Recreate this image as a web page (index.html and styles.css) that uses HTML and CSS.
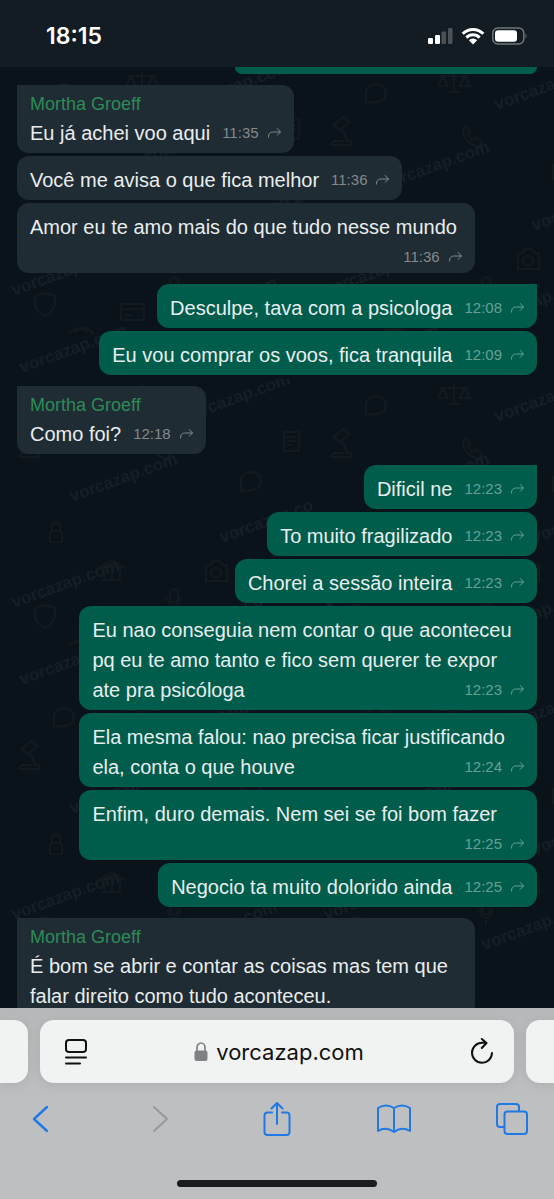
FILE: index.html
```html
<!DOCTYPE html>
<html lang="pt-BR">
<head>
<meta charset="utf-8">
<meta name="viewport" content="width=device-width, initial-scale=1">
<title>vorcazap.com</title>
<link rel="stylesheet" href="styles.css">
</head>
<body>
<svg class="defs" aria-hidden="true">
  <symbol id="fwd" viewBox="0 0 14 12"><path d="M1 10.500C1 6.500 2.500 5 6 5H13M9.500 1.200L13 5L9.500 8.500"/></symbol>
</svg>
<div class="phone">
  <header class="status">
    <time class="clock">18:15</time>
    <div class="status-icons">
      <svg width="26" height="18" viewBox="0 0 26 18" aria-label="Sinal">
        <g fill="#fff"><rect x="0" y="11" width="5" height="6" rx="1.200"/><rect x="7" y="8" width="5" height="9" rx="1.200"/></g>
        <g fill="#4a5157"><rect x="13.500" y="4.500" width="4.500" height="12.500" rx="1.200"/><rect x="20" y="1" width="4.500" height="16" rx="1.200"/></g>
      </svg>
      <svg width="24" height="18" viewBox="0 0 24 18" aria-label="Wi-Fi">
        <g fill="none" stroke="#fff" stroke-width="3"><path d="M1.700 6.700A14.600 14.600 0 0 1 22.300 6.700"/><path d="M5.400 10.600A9.300 9.300 0 0 1 18.600 10.600"/></g>
        <path d="M12 17.500L7.800 13.200A6 6 0 0 1 16.200 13.200Z" fill="#fff"/>
      </svg>
      <svg width="36" height="18" viewBox="0 0 36 18" aria-label="Bateria">
        <rect x=".8" y="1" width="31" height="16" rx="5" fill="none" stroke="#71777b" stroke-width="1.500"/>
        <rect x="3" y="3.200" width="22" height="11.600" rx="3" fill="#fff"/>
        <path d="M33.500 6.500Q35.500 9 33.500 11.500Z" fill="#71777b"/>
      </svg>
    </div>
  </header>

  <main class="chat">
    <svg class="wallpaper" aria-hidden="true">
      <defs>
        <pattern id="tile" width="312" height="312" patternUnits="userSpaceOnUse">
          <g class="ink">
            <path d="M142 5V25M136 25H148M128 9H156M131 9L126 19H136ZM153 9L148 19H158Z"/>
            <path d="M54 36V26A10 9 0 1 1 64 35Z"/>
            <path d="M241 112V102A10 9 0 1 1 251 111Z"/>
            <path d="M19 78H39V74H22ZM36 74L29 62M22 58L31 50L37 55L28 63Z"/>
            <path d="M151 64Q152 77 168 80L170 75L164 71L160 73Q157 70 156 67L158 63L154 59Z"/>
            <path d="M284 53H299V72H284ZM287 58H296M287 62H296M287 66H293"/>
            <path d="M50 152H62V163H50ZM52 152V147Q56 139 60 147V152M56 156V159"/>
            <path d="M206 186H211L213 182H220L222 186H227V202H206Z"/><circle cx="216" cy="194" r="5"/>
            <path d="M35 229L45 226L55 229V238Q53 245 45 249Q37 245 35 238Z"/>
            <path d="M121 237H144V253H121ZM121 242H144M125 248H131"/>
            <path d="M102 201H122M104 199V190M112 199V190M120 199V190M101 188H123L112 181Z"/>
            <path d="M170 213Q174 208 178 213V221Q174 226 170 221ZM167 219Q174 235 181 219M174 229V234"/>
            <path d="M68 267Q81 255 94 267M74 265Q81 260 88 265"/>
          </g>
          <g class="mark">
            <text transform="translate(14 229) rotate(-20)">vorcazap.com</text>
            <text transform="translate(22 306) rotate(-20)">vorcazap.com</text>
            <text transform="translate(185 43) rotate(-20)">vorcazap.com</text>
            <text transform="translate(72 123) rotate(-20)">vorcazap.com</text>
            <text transform="translate(222 164) rotate(-20)">vorcazap.com</text>
            <text transform="translate(172 259) rotate(-20)">vorcazap.com</text>
          </g>
        </pattern>
      </defs>
      <rect width="100%" height="100%" fill="url(#tile)"/>
    </svg>

    <div class="thread">
      <div class="peek"></div>
      <article class="msg in first"><h2>Mortha Groeff</h2><span>Eu já achei voo aqui</span><div class="meta"><time>11:35</time><svg><use href="#fwd"/></svg></div></article>
      <article class="msg in"><span>Você me avisa o que fica melhor</span><div class="meta"><time>11:36</time><svg><use href="#fwd"/></svg></div></article>
      <article class="msg in"><span>Amor eu te amo mais do que tudo nesse mundo</span><div class="meta"><time>11:36</time><svg><use href="#fwd"/></svg></div></article>
      <article class="msg out first"><span>Desculpe, tava com a psicologa</span><div class="meta"><time>12:08</time><svg><use href="#fwd"/></svg></div></article>
      <article class="msg out"><span>Eu vou comprar os voos, fica tranquila</span><div class="meta"><time>12:09</time><svg><use href="#fwd"/></svg></div></article>
      <article class="msg in first"><h2>Mortha Groeff</h2><span>Como foi?</span><div class="meta"><time>12:18</time><svg><use href="#fwd"/></svg></div></article>
      <article class="msg out first"><span>Dificil ne</span><div class="meta"><time>12:23</time><svg><use href="#fwd"/></svg></div></article>
      <article class="msg out"><span>To muito fragilizado</span><div class="meta"><time>12:23</time><svg><use href="#fwd"/></svg></div></article>
      <article class="msg out"><span>Chorei a sessão inteira</span><div class="meta"><time>12:23</time><svg><use href="#fwd"/></svg></div></article>
      <article class="msg out"><span>Eu nao conseguia nem contar o que aconteceu pq eu te amo tanto e fico sem querer te expor ate pra psicóloga</span><div class="meta"><time>12:23</time><svg><use href="#fwd"/></svg></div></article>
      <article class="msg out"><span>Ela mesma falou: nao precisa ficar justificando ela, conta o que houve</span><div class="meta"><time>12:24</time><svg><use href="#fwd"/></svg></div></article>
      <article class="msg out"><span>Enfim, duro demais. Nem sei se foi bom fazer</span><div class="meta"><time>12:25</time><svg><use href="#fwd"/></svg></div></article>
      <article class="msg out"><span>Negocio ta muito dolorido ainda</span><div class="meta"><time>12:25</time><svg><use href="#fwd"/></svg></div></article>
      <article class="msg in first"><h2>Mortha Groeff</h2><span>É bom se abrir e contar as coisas mas tem que falar direito como tudo aconteceu.</span></article>
    </div>
  </main>

  <footer class="browser">
    <div class="tabs">
      <div class="tab-edge left"></div>
      <div class="address">
        <button type="button" aria-label="Opções da página"><svg width="24" height="28" viewBox="0 0 24 28"><rect x="2" y="2" width="20" height="12" rx="3"/><path d="M2 19.500H22M2 25.500H16"/></svg></button>
        <button type="button" class="url"><svg width="14" height="20" viewBox="0 0 14 20"><rect x=".5" y="8.500" width="13" height="10.500" rx="2" fill="#808184"/><path d="M3 9V5.500A4 4.500 0 0 1 11 5.500V9" fill="none" stroke="#808184" stroke-width="1.700"/></svg>vorcazap.com</button>
        <button type="button" aria-label="Recarregar"><svg width="24" height="28" viewBox="0 0 24 28"><path d="M15 4.800H12A10 10 0 1 0 22 15M11.800 1L16.500 5L11.800 10"/></svg></button>
      </div>
      <div class="tab-edge right"></div>
    </div>
    <nav class="toolbar">
      <button type="button" aria-label="Voltar"><svg width="32" height="36" viewBox="0 0 32 36"><path d="M22 6L9 18L22 30" stroke-width="2.400"/></svg></button>
      <button type="button" class="off" aria-label="Avançar" disabled><svg width="32" height="36" viewBox="0 0 32 36"><path d="M11 6L24 18L11 30"/></svg></button>
      <button type="button" aria-label="Compartilhar"><svg width="32" height="36" viewBox="0 0 32 36"><path d="M11 11.500H6.500Q3.500 11.500 3.500 14.500V31Q3.500 34 6.500 34H25.500Q28.500 34 28.500 31V14.500Q28.500 11.500 25.500 11.500H21M16 23V2.500M10.500 7.500L16 2L21.500 7.500"/></svg></button>
      <button type="button" aria-label="Favoritos"><svg width="36" height="36" viewBox="0 0 36 36"><path d="M18 31Q10 25 2 30V7Q10 2 18 7Q26 2 34 7V30Q26 25 18 31ZM18 7V31"/></svg></button>
      <button type="button" aria-label="Abas"><svg width="34" height="36" viewBox="0 0 34 36"><path d="M9 26H5Q2 26 2 23V6Q2 3 5 3H21Q24 3 24 6V10"/><rect x="9.500" y="10.500" width="22.500" height="22.500" rx="3"/></svg></button>
    </nav>
    <div class="home"></div>
  </footer>
</div>
</body>
</html>
```
FILE: styles.css
```css
* { box-sizing: border-box; }
body { margin: 0; background: #0b131a; font-family: "Liberation Sans", Arial, sans-serif; }
button { border: 0; padding: 0; background: none; font: inherit; color: inherit; }
.defs { position: absolute; width: 0; height: 0; }
.phone { display: flex; flex-direction: column; height: 100vh; overflow: hidden; }

.status {
  flex: none;
  height: 67px;
  padding: 4px 26px 0 46px;
  display: flex;
  align-items: center;
  justify-content: space-between;
  background: #131c23;
  color: #fff;
}
.clock { font: 600 23px/28px Inter, sans-serif; }
.status-icons { display: flex; align-items: center; gap: 7px; }

.chat { position: relative; flex: 1; min-height: 0; overflow: hidden; background: #0b131a; }
.wallpaper { position: absolute; inset: 0; width: 100%; height: 100%; }
.mark { font: bold 17px "Liberation Sans", Arial, sans-serif; fill: #151e24; }
.ink { fill: none; stroke: #121a20; stroke-width: 2; }

.thread { position: relative; display: flex; flex-direction: column; gap: 3px; padding: 0 17px; }
.peek { align-self: flex-end; width: 58%; height: 7px; background: #005d4b; border-radius: 0 0 10px 10px; }
.msg {
  display: flow-root;
  flex: none;
  max-width: 88%;
  padding: 9px 12px 5px 13px;
  border-radius: 12px;
  font-size: 20px;
  line-height: 30px;
  color: #e9edef;
}
.msg h2 { margin: 0 0 4px; font-size: 18px; font-weight: 400; line-height: 20px; color: #2d8a58; }
.in { align-self: flex-start; background: #202c33; }
.out { align-self: flex-end; background: #005d4b; }
.first { margin-top: 8px; }
.in.first { border-top-left-radius: 0; }
.out.first { border-top-right-radius: 0; }
.meta {
  float: right;
  display: flex;
  align-items: center;
  gap: 8px;
  height: 26px;
  margin-left: 12px;
  font-size: 15px;
  line-height: 30px;
  color: #84898c;
}
.out .meta { color: #66a094; }
.meta time { height: 30px; margin-top: 4px; }
.meta svg { width: 15px; height: 12px; margin-top: 4px; fill: none; stroke: currentColor; stroke-width: 1; }

.browser { flex: none; padding: 12px 0; background: linear-gradient(#b5b9ba, #bdbfc1 50%); }
.tabs { display: grid; grid-template-columns: 28px 1fr 28px; gap: 12px; }
.tab-edge, .address { height: 63px; background: #f1f3f3; box-shadow: 0 2px 12px rgba(0, 0, 0, .08); }
.left { border-radius: 0 14px 14px 0; }
.right { border-radius: 14px 0 0 14px; }
.address {
  display: flex;
  align-items: center;
  justify-content: space-between;
  padding: 0 20px 0 24px;
  border-radius: 14px;
  color: #111;
}
.address button { display: flex; align-items: center; }
.address svg { fill: none; stroke: #111; stroke-width: 2; stroke-linecap: round; stroke-linejoin: round; }
.address .url { gap: 8px; font: 400 22px/32px Inter, sans-serif; }
.address .url svg { stroke: none; }
.toolbar { display: flex; align-items: center; justify-content: space-between; height: 72px; padding: 0 26px 0 25px; }
.toolbar button { display: flex; justify-content: center; width: 32px; color: #2079e4; }
.toolbar .off { color: #96999b; }
.toolbar svg { flex: none; fill: none; stroke: currentColor; stroke-width: 2; stroke-linecap: round; stroke-linejoin: round; }
.home { width: 36%; height: 7px; margin: 25px auto 0; border-radius: 4px; background: #1b1c1e; }
```
